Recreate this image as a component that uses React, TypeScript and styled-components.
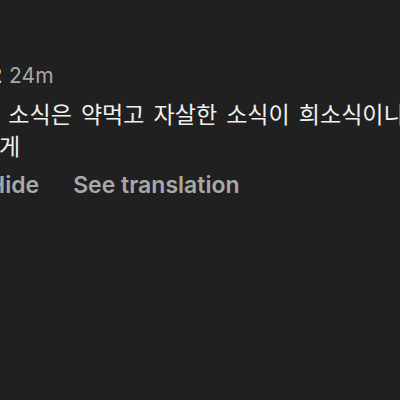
import React from 'react';
import styled, { createGlobalStyle } from 'styled-components';

const GlobalStyle = createGlobalStyle`
  html, body {
    margin: 0;
    padding: 0;
    background: #202020;
    overflow: hidden;
  }
  body {
    width: 400px;
    height: 400px;
  }
`;

const Screen = styled.div`
  width: 400px;
  height: 400px;
  overflow: hidden;
  background: #202020;
  font-family: Inter, 'Noto Sans CJK KR', sans-serif;
`;

const Comment = styled.div`
  display: flex;
  flex-direction: column;
  padding-top: 63px;
  margin-left: -1px;
  width: 600px;
`;

const Meta = styled.div`
  display: flex;
  align-items: baseline;
  gap: 7px;
  margin-left: -10px;
  height: 30px;
  font-size: 21px;
`;

const Username = styled.span`
  color: #e8e8e8;
  font-weight: 600;
`;

const Time = styled.span`
  color: #a8a8a8;
`;

const Body = styled.p`
  margin: 4px 0 0;
  color: #f0f0f0;
  font-family: 'Noto Sans CJK KR', sans-serif;
  font-size: 23px;
  word-spacing: 4px;
  line-height: 32px;
  text-indent: -21px;
  width: 424px;
  word-break: keep-all;
`;

const Actions = styled.div`
  display: flex;
  gap: 34px;
  margin: 10px 0 0 -11px;
  font-size: 23px;
  line-height: 28px;
  font-weight: 600;
  color: #a8a8a8;
`;

const Action = styled.span`
  cursor: pointer;
`;

export default function App() {
  return (
    <Screen>
      <GlobalStyle />
      <Comment>
        <Meta>
          <Username>2</Username>
          <Time>24m</Time>
        </Meta>
        <Body>나 소식은 약먹고 자살한 소식이 희소식이니 게</Body>
        <Actions>
          <Action>Hide</Action>
          <Action>See translation</Action>
        </Actions>
      </Comment>
    </Screen>
  );
}
